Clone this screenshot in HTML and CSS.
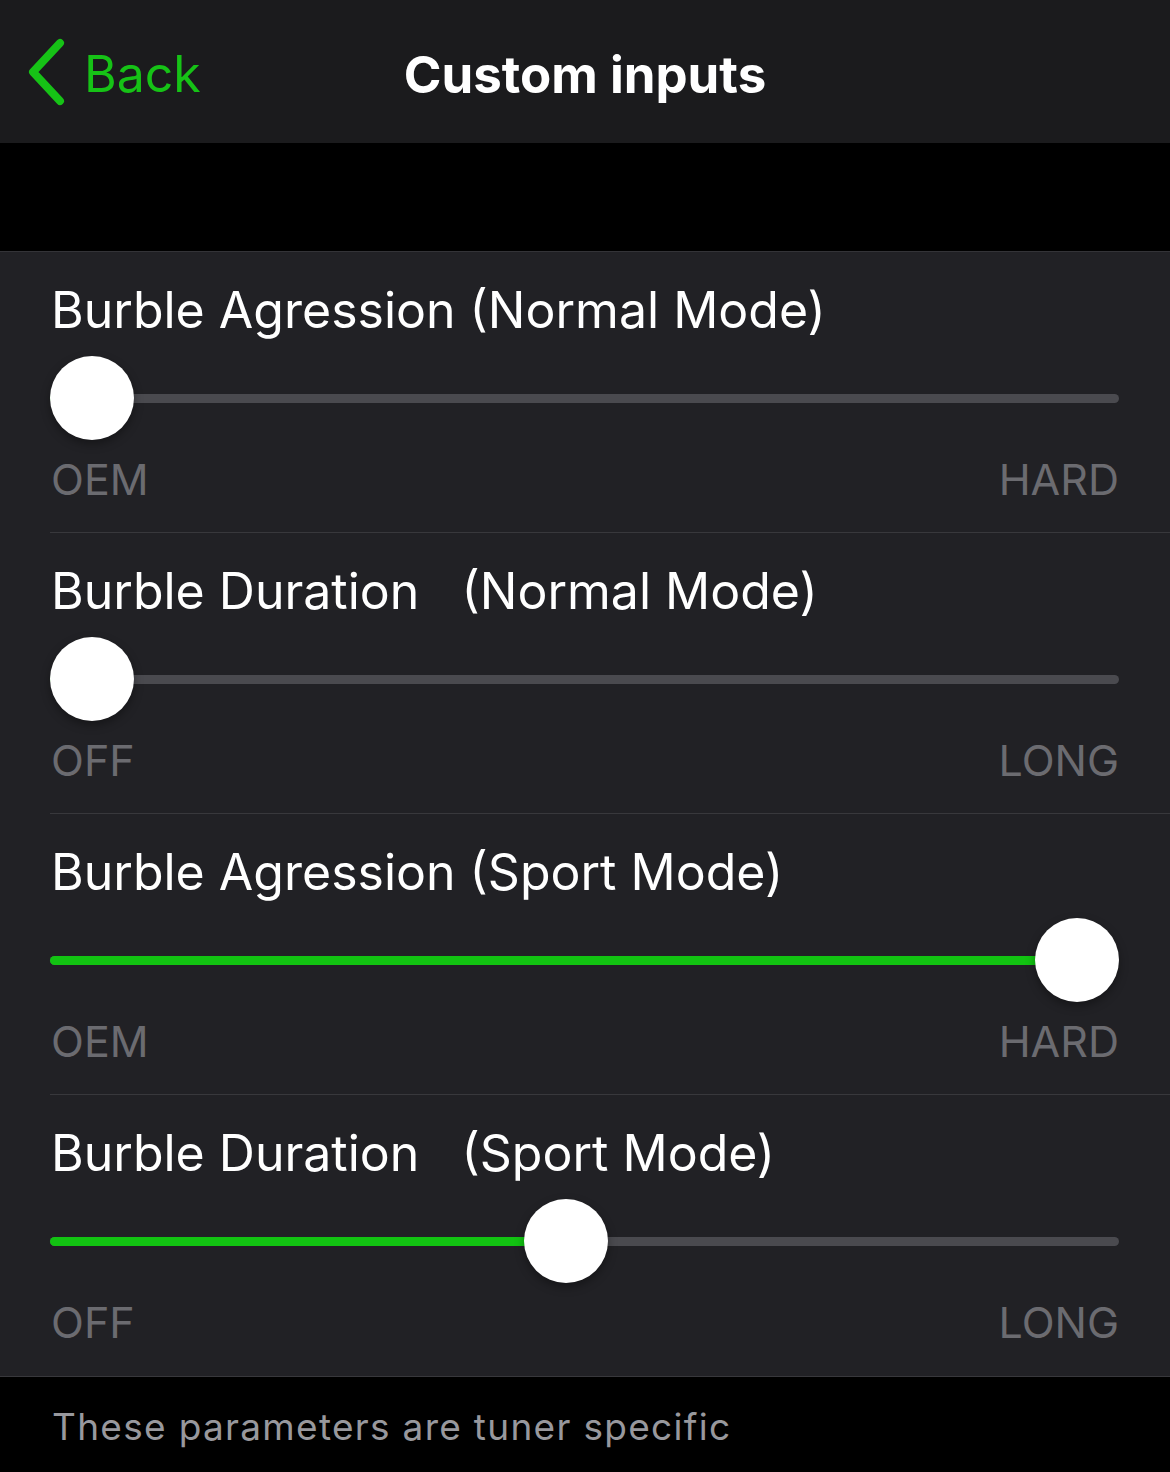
FILE: index.html
```html
<!DOCTYPE html>
<html lang="en">
<head>
    <meta charset="UTF-8">
    <meta name="viewport" content="width=device-width, initial-scale=1.0">
    <title>Custom inputs</title>
    <link rel="stylesheet" href="styles.css">
</head>
<body>
<div class="navbar">
    <a class="back" href="#">
        <svg class="chevron" width="44" height="70" viewBox="0 0 44 70">
            <polyline points="36,6 9,35 36,64" fill="none" stroke="#16c216" stroke-width="8" stroke-linecap="round" stroke-linejoin="round"/>
        </svg>
        <span>Back</span>
    </a>
    <h1 class="nav-title">Custom inputs</h1>
</div>

<div class="spacer"></div>

<div class="group">
    <div class="row">
        <div class="row-title">Burble Agression (Normal Mode)</div>
        <div class="slider">
            <div class="track"></div>
            <div class="lane">
                <div class="fill" style="width: calc(0% + 42px)"></div>
                <div class="thumb" style="left: 0%"></div>
            </div>
        </div>
        <div class="labels"><span>OEM</span><span>HARD</span></div>
    </div>
    <div class="row">
        <div class="row-title">Burble Duration   (Normal Mode)</div>
        <div class="slider">
            <div class="track"></div>
            <div class="lane">
                <div class="fill" style="width: calc(0% + 42px)"></div>
                <div class="thumb" style="left: 0%"></div>
            </div>
        </div>
        <div class="labels"><span>OFF</span><span>LONG</span></div>
    </div>
    <div class="row">
        <div class="row-title">Burble Agression (Sport Mode)</div>
        <div class="slider">
            <div class="track"></div>
            <div class="lane">
                <div class="fill" style="width: calc(100% + 42px)"></div>
                <div class="thumb" style="left: 100%"></div>
            </div>
        </div>
        <div class="labels"><span>OEM</span><span>HARD</span></div>
    </div>
    <div class="row last">
        <div class="row-title">Burble Duration   (Sport Mode)</div>
        <div class="slider">
            <div class="track"></div>
            <div class="lane">
                <div class="fill" style="width: calc(48.1% + 42px)"></div>
                <div class="thumb" style="left: 48.1%"></div>
            </div>
        </div>
        <div class="labels"><span>OFF</span><span>LONG</span></div>
    </div>
</div>

<div class="footer">These parameters are tuner specific</div>
</body>
</html>
```

FILE: styles.css
```css
body {
    background-color: #000;
    font-family: Inter, "Noto Sans", sans-serif;
    margin: 0;
    padding: 0;
    color: #fff;
}
.navbar {
    background-color: #1b1b1d;
    height: 143px;
    display: flex;
    align-items: center;
    position: relative;
}
.back {
    display: flex;
    align-items: center;
    gap: 16px;
    margin-left: 24px;
    color: #16c216;
    text-decoration: none;
    font-size: 50px;
    margin-top: 4px;
}
.chevron {
    display: block;
    margin-top: -4px;
}
.nav-title {
    position: absolute;
    left: 0;
    right: 0;
    top: 0;
    margin: 0;
    line-height: 150px;
    text-align: center;
    font-size: 51px;
    font-weight: 700;
    pointer-events: none;
}
.spacer {
    height: 108px;
}
.group {
    background-color: #212125;
    border-top: 1px solid #333337;
    border-bottom: 1px solid #38383c;
}
.row {
    margin-left: 50px;
    padding-right: 51px;
    padding-top: 28px;
    padding-bottom: 27px;
    border-bottom: 1px solid #38383c;
}
.row.last {
    border-bottom: none;
    padding-bottom: 28px;
}
.row-title {
    font-size: 50px;
    line-height: 60px;
    white-space: pre;
    padding-left: 1px;
}
.slider {
    position: relative;
    height: 84px;
    margin: 16px 0 13px;
}
.track {
    position: absolute;
    left: 0;
    right: 0;
    top: 38px;
    height: 9px;
    border-radius: 5px;
    background-color: #4a4a4f;
}
.lane {
    position: absolute;
    left: 0;
    right: 84px;
    top: 0;
    bottom: 0;
}
.fill {
    position: absolute;
    left: 0;
    top: 38px;
    height: 9px;
    border-radius: 5px;
    background-color: #12c312;
}
.thumb {
    position: absolute;
    top: 0;
    width: 84px;
    height: 84px;
    border-radius: 50%;
    background-color: #fff;
    box-shadow: 0 4px 10px rgba(0, 0, 0, 0.35);
}
.labels {
    display: flex;
    justify-content: space-between;
    font-size: 43px;
    line-height: 52px;
    color: #6b6b70;
    padding-left: 1px;
}
.footer {
    padding: 22px 0 0 52px;
    font-size: 37px;
    line-height: 56px;
    letter-spacing: 1.3px;
    color: #98989d;
}
```
